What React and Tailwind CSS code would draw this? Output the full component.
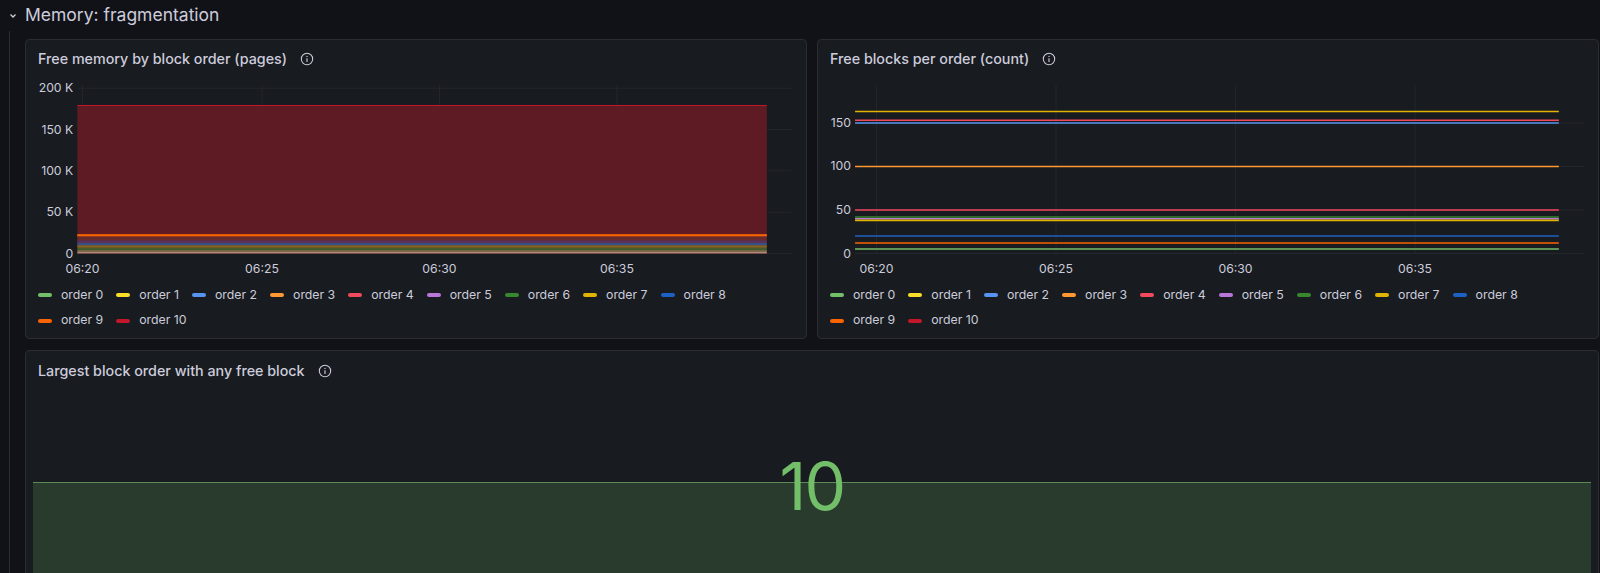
import React from "react";

const legend = [
  ["order 0", "#73bf69"], ["order 1", "#fade2a"], ["order 2", "#5794f2"], ["order 3", "#ff9830"],
  ["order 4", "#f2495c"], ["order 5", "#b877d9"], ["order 6", "#37872d"], ["order 7", "#e0b400"],
  ["order 8", "#1f60c4"], ["order 9", "#fa6400"], ["order 10", "#c4162a"],
];

function Info() {
  return (
    <svg width="14" height="14" viewBox="0 0 16 16" className="ml-[13px]">
      <circle cx="8" cy="8" r="6.5" fill="none" stroke="#ccccdc" strokeWidth="1.2" />
      <line x1="8" y1="7.2" x2="8" y2="11.3" stroke="#ccccdc" strokeWidth="1.3" />
      <circle cx="8" cy="5" r="0.8" fill="#ccccdc" />
    </svg>
  );
}

function Legend() {
  return (
    <div className="flex flex-wrap gap-x-[13px] gap-y-[7px] px-[12px] w-[750px] text-[12.3px] text-[#ccccdc]">
      {legend.map(([n, c]) => (
        <div key={n} className="flex items-center gap-[9px]">
          <span className="w-[14px] h-[4px] rounded-full" style={{ background: c }} />
          {n}
        </div>
      ))}
    </div>
  );
}

const xt = [[76, "06:20"], [252, "06:25"], [426, "06:30"], [600, "06:35"]];

function Chart1() {
  const y = (k) => 173 - k * 0.81;
  const bands = [[0, 2, "#c8a58a"], [2, 4, "#8a8a5a"], [4, 7, "#3d6b2f"], [7, 10, "#8a7a20"], [10, 13, "#2d5fa0"], [13, 16, "#5a3a6a"], [16, 21, "#6a3030"], [21, 23, "#e0601a"]];
  return (
    <svg width="782" height="204" viewBox="0 0 766 200" className="block">
      {[0, 50, 100, 150, 200].map((k) => (
        <g key={k}>
          <line x1="50" x2="750" y1={y(k)} y2={y(k)} stroke="#24262b" />
          <text x="46" y={y(k) + 4} textAnchor="end" fontSize="12" fill="#ccccdc" fontFamily="Inter">{k === 0 ? "0" : `${k} K`}</text>
        </g>
      ))}
      {xt.map(([x]) => <line key={x} x1={x - 21} x2={x - 21} y1="8" y2="173" stroke="#24262b" />)}
      <rect x="50" y={y(179)} width="676" height={173 - y(179)} fill="#5e1b24" />
      <line x1="50" x2="726" y1={y(179)} y2={y(179)} stroke="#c4162a" />
      {bands.map(([a, b, c], i) => (
        <rect key={i} x="50" y={y(b)} width="676" height={y(a) - y(b)} fill={c} opacity="0.8" />
      ))}
      <line x1="50" x2="726" y1={y(22)} y2={y(22)} stroke="#fa6400" strokeWidth="2" />
      {xt.map(([x, t]) => <text key={t} x={x - 21} y="192" textAnchor="middle" fontSize="12" fill="#ccccdc" fontFamily="Inter">{t}</text>)}
    </svg>
  );
}

function Chart2() {
  const y = (v) => 173 - v * (128 / 150);
  const lines = [[163, "#e0b400"], [153, "#f2495c"], [150, "#5794f2"], [100, "#ff9830"], [50, "#f2495c"], [42, "#37872d"], [40, "#b877d9"], [38, "#e0b400"], [20, "#1f60c4"], [12, "#fa6400"], [5, "#73bf69"]];
  return (
    <svg width="782" height="204" viewBox="0 0 766 200" className="block">
      {[0, 50, 100, 150].map((k) => (
        <g key={k}>
          <line x1="36" x2="750" y1={y(k)} y2={y(k)} stroke="#24262b" />
          <text x="32" y={y(k) + 4} textAnchor="end" fontSize="12" fill="#ccccdc" fontFamily="Inter">{k}</text>
        </g>
      ))}
      {[57, 233, 409, 585].map((x) => <line key={x} x1={x} x2={x} y1="8" y2="173" stroke="#24262b" />)}
      {lines.map(([v, c], i) => <line key={i} x1="36" x2="726" y1={y(v)} y2={y(v)} stroke={c} strokeWidth="1.5" />)}
      {[[57, "06:20"], [233, "06:25"], [409, "06:30"], [585, "06:35"]].map(([x, t]) => <text key={t} x={x} y="192" textAnchor="middle" fontSize="12" fill="#ccccdc" fontFamily="Inter">{t}</text>)}
    </svg>
  );
}

function Panel({ title, children }) {
  return (
    <div className="w-[782px] h-[300px] bg-[#181b1f] border border-[#2a2c31] rounded-[4px] overflow-hidden">
      <div className="h-[37px] flex items-center pl-[12px] text-[14.3px] text-[#ccccdc] font-medium">
        {title}<Info />
      </div>
      {children}
    </div>
  );
}

export default function App() {
  return (
    <div className="w-[1600px] h-[573px] bg-[#111217] overflow-hidden" style={{ fontFamily: "Inter, sans-serif" }}>
      <div className="h-[31px] flex items-center">
        <span className="w-[25px] flex justify-center">
          <svg width="10" height="10" viewBox="0 0 10 10"><path d="M2.5 3.5 L5 6 L7.5 3.5" fill="none" stroke="#ccccdc" strokeWidth="1.3" /></svg>
        </span>
        <span className="text-[17.5px] text-[#ccccdc]">Memory: fragmentation</span>
      </div>
      <div className="flex">
        <div className="w-[10px] ml-[9px] mr-[6px] border-l border-[#2a2c31]" />
        <div className="flex flex-col gap-[11px] pt-[8px]">
          <div className="flex gap-[10px]">
            <Panel title="Free memory by block order (pages)">
              <Chart1 />
              <div className="mt-[5px]"><Legend /></div>
            </Panel>
            <Panel title="Free blocks per order (count)">
              <Chart2 />
              <div className="mt-[5px]"><Legend /></div>
            </Panel>
          </div>
          <div className="w-[1574px] h-[240px] bg-[#181b1f] border border-[#2a2c31] rounded-[4px] flex flex-col">
            <div className="h-[40px] flex items-center pl-[12px] text-[14.3px] text-[#ccccdc] font-medium">
              Largest block order with any free block<Info />
            </div>
            <div className="relative flex-1">
              <div className="absolute left-[7px] right-[7px] top-[91px] bottom-0 bg-[#283b2c] border-t border-[#5f8a57]" />
              <div className="relative text-center text-[66px] leading-none text-[#73bf69] mt-[62px] tracking-tight">10</div>
            </div>
          </div>
        </div>
      </div>
    </div>
  );
}
